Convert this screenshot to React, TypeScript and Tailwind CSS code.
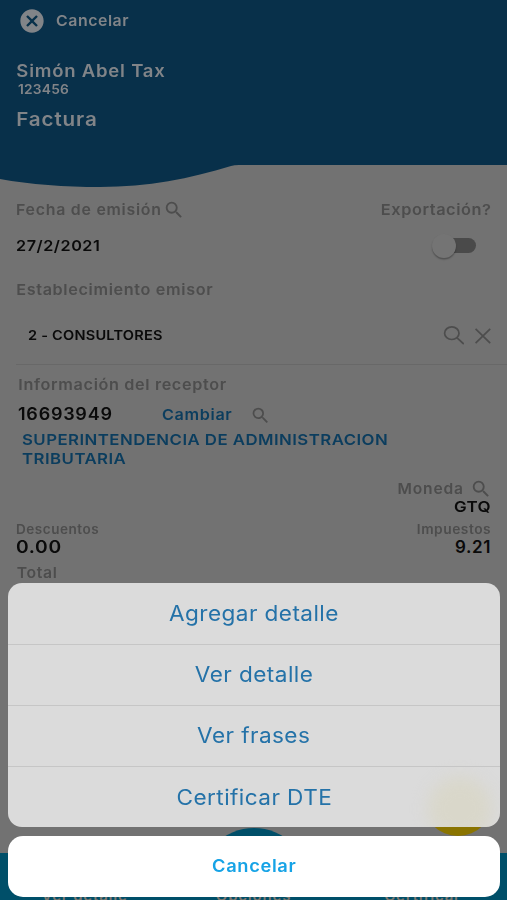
import { MdCancel, MdSearch } from 'react-icons/md';

const actions = ['Agregar detalle', 'Ver detalle', 'Ver frases', 'Certificar DTE'];

function Header() {
  return (
    <header className="text-[#818488] font-semibold">
      <div className="h-[165px] bg-[#08304a] pt-[9px]">
        <div className="flex h-6 items-center pl-[18px]">
          <MdCancel className="size-[28px]" />
          <span className="ml-[10px] origin-left scale-x-[1.06] text-[15px] tracking-[0.5px]">Cancelar</span>
        </div>
        <div className="mt-[27px] flex h-6 origin-left scale-x-[1.09] items-center pl-[15px] text-[17px] tracking-[0.7px]">
          Simón Abel Tax
        </div>
        <div className="flex h-3 origin-left scale-x-[1.06] items-center pl-[17px] text-[13px] tracking-[0.2px]">123456</div>
        <div className="mt-3 flex h-6 origin-left scale-x-[1.085] items-center pl-[15px] text-[19px] tracking-[0.8px]">
          Factura
        </div>
      </div>
      <svg className="block h-[22px] w-full" viewBox="0 0 507 22">
        <path fill="#08304a" d="M0 0V14C30 19.5 65 22 100 22C148 22 190 13.5 231 1Q234 0 239 0Z" />
      </svg>
    </header>
  );
}

function ExportSwitch() {
  return (
    <div className="-mt-px flex h-6 w-11 items-center">
      <div className="z-10 size-6 rounded-full bg-[#747474] shadow-[0_1.5px_1.5px_rgba(0,0,0,0.3)]" />
      <div className="-ml-3.5 h-[15px] w-[34px] rounded-full bg-[#4a4a4a]" />
    </div>
  );
}

function InvoiceForm() {
  return (
    <main className="font-semibold text-[#4d4d4d]">
      <div className="mt-[13px] flex h-5 items-center pr-4 pl-4 text-[15px]">
        <span className="w-[147px] origin-left scale-x-[1.06] whitespace-nowrap tracking-[0.7px]">Fecha de emisión</span>
        <MdSearch className="size-[22px]" />
        <span className="ml-auto origin-right scale-x-[1.09] tracking-[0.5px]">Exportación?</span>
      </div>
      <div className="mt-[14px] flex h-6 items-center justify-between pr-[31px] pl-4">
        <span className="origin-left scale-x-[1.08] text-[15px] tracking-[0.5px] text-[#0a0a0a]">27/2/2021</span>
        <ExportSwitch />
      </div>
      <div className="mt-[22px] flex h-5 origin-left scale-x-[1.08] items-center pl-[15px] text-[15px] tracking-[0.6px]">
        Establecimiento emisor
      </div>
      <div className="mt-6 ml-4 flex h-[41px] items-start border-b border-[#686868] pr-4 pl-3">
        <span className="flex h-6 origin-left scale-x-[1.12] items-center text-[13px] tracking-[0.2px] text-[#0a0a0a]">
          2 - CONSULTORES
        </span>
        <svg className="mt-0.5 ml-auto h-5 w-[21px]" viewBox="0 0 21 20" fill="none" stroke="currentColor" strokeWidth="1.7">
          <ellipse cx="8.8" cy="7.2" rx="7.2" ry="6.3" />
          <path d="M13.8 11.6L20.8 18" />
        </svg>
        <svg className="mt-1 ml-[11px] size-4" viewBox="0 0 16 16" fill="none" stroke="currentColor" strokeWidth="1.7">
          <path d="M0.6 0.8L15.2 15.2M15.2 0.8L0.6 15.2" />
        </svg>
      </div>
      <div className="mt-[10px] flex h-5 origin-left scale-x-[1.08] items-center pl-[17px] text-[15px] tracking-[0.6px]">
        Información del receptor
      </div>
      <div className="mt-[10px] flex h-5 items-center pl-[18px]">
        <span className="w-36 origin-left scale-x-[1.06] text-[17px] tracking-[0.7px] text-[#0a0a0a]">16693949</span>
        <span className="w-[88px] origin-left scale-x-[1.08] text-[15px] tracking-[0.6px] text-[#0b3d5e]">Cambiar</span>
        <MdSearch className="size-[21px]" />
      </div>
      <div className="mt-[6px] ml-[22px] h-[37px] w-[350px] origin-left scale-x-[1.12] text-[15px] leading-[18.5px] tracking-[0.4px] text-[#0b3d5e]">
        SUPERINTENDENCIA DE ADMINISTRACION TRIBUTARIA
      </div>
      <div className="mt-3 flex h-[18px] items-center justify-end pr-[15px]">
        <span className="mr-[6px] origin-right scale-x-[1.04] text-[15px] tracking-[0.8px]">Moneda</span>
        <MdSearch className="size-[22px]" />
      </div>
      <div className="mr-4 flex h-[19px] origin-right scale-x-[1.13] items-center justify-end text-[15px] tracking-[0.3px] text-[#0a0a0a]">
        GTQ
      </div>
      <div className="mt-1 flex h-[17px] items-center justify-between px-4 text-[13px] tracking-[0.5px]">
        <span className="origin-left scale-x-[1.04]">Descuentos</span>
        <span className="origin-right scale-x-[1.06]">Impuestos</span>
      </div>
      <div className="mt-px flex h-[17px] items-center justify-between px-4 text-[17px] tracking-[0.6px] text-[#0a0a0a]">
        <span className="origin-left scale-x-[1.13]">0.00</span>
        <span>9.21</span>
      </div>
      <div className="mt-[7px] flex h-5 origin-left scale-x-[1.05] items-center pl-4 text-[15px] tracking-[0.6px]">Total</div>
    </main>
  );
}

function BottomBar() {
  return (
    <>
      <div className="absolute top-[828px] left-[199px] size-[110px] rounded-full bg-[#004f69]" />
      <div className="absolute top-[766px] left-[423px] size-[70px] rounded-full bg-[#8a7400]" />
      <div className="absolute inset-x-0 bottom-0 h-[47px] bg-[#004f69] text-[15px] leading-5 font-semibold tracking-[0.8px] text-[#80796f]">
        <div className="flex pt-[33px]">
          <span className="w-[169px] text-center">Ver detalle</span>
          <span className="w-[169px] text-center">Opciones</span>
          <span className="w-[169px] text-center">Certificar</span>
        </div>
      </div>
    </>
  );
}

function ActionSheet() {
  return (
    <div className="absolute inset-x-2 bottom-[3px] mr-[-1px] flex flex-col gap-[9px]">
      <div className="relative h-[244px] overflow-hidden rounded-[14px] bg-[#dbdbdb] pt-px text-[21px] text-[#2472a8]">
        <div className="absolute top-[194px] left-[420px] size-[64px] rounded-full bg-[#d9d7ca] blur-[8px]" />
        <div className="relative divide-y divide-[#c6c6c6]">
          {actions.map((label) => (
            <button key={label} className="flex h-[61px] w-full items-center justify-center tracking-[0.4px]">
              <span className="scale-x-[1.075]">{label}</span>
            </button>
          ))}
        </div>
      </div>
      <button className="h-[61px] rounded-[15px] bg-white text-[17px] font-semibold tracking-[0.6px] text-[#16a3e6]">
        <span className="inline-block scale-x-[1.075]">Cancelar</span>
      </button>
    </div>
  );
}

export default function App() {
  return (
    <div className="relative h-[900px] w-full overflow-hidden bg-[#727272] font-['Inter',sans-serif]">
      <Header />
      <InvoiceForm />
      <BottomBar />
      <ActionSheet />
    </div>
  );
}
